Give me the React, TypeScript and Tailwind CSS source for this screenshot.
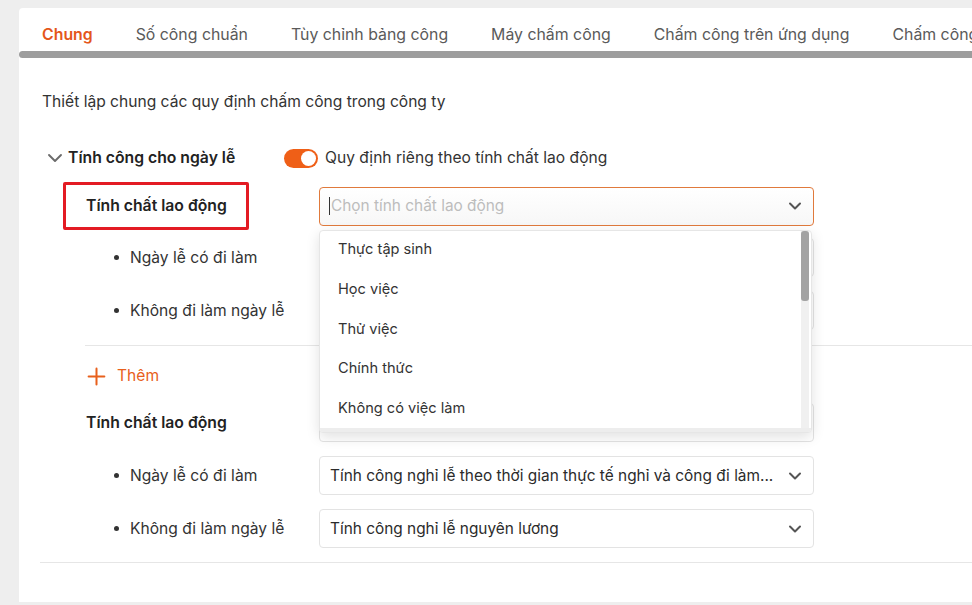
import { ChevronDown, Plus } from "lucide-react";

const tabs = [
  "Chung",
  "Số công chuẩn",
  "Tùy chỉnh bảng công",
  "Máy chấm công",
  "Chấm công trên ứng dụng",
  "Chấm công",
];

const options = ["Thực tập sinh", "Học việc", "Thử việc", "Chính thức", "Không có việc làm"];

function Select({ value, placeholder }: { value?: string; placeholder?: string }) {
  return (
    <div className="flex h-[39px] w-[495px] items-center justify-between rounded-[4px] border border-[#e3e3e3] bg-white pl-[10px] pr-[8px]">
      <span className="truncate text-[15.4px] text-[#2b2b2b]">{value ?? placeholder}</span>
      <ChevronDown className="h-[20px] w-[20px] shrink-0 text-[#555]" strokeWidth={2.4} />
    </div>
  );
}

function Bullet({ label, value }: { label: string; value?: string }) {
  return (
    <div className="flex items-center">
      <div className="flex w-[234px] items-center pl-[29px]">
        <span className="h-[5px] w-[5px] rounded-full bg-[#333]" />
        <span className="ml-[11px] text-[15.6px] text-[#333]">{label}</span>
      </div>
      <Select value={value} />
    </div>
  );
}

export default function App() {
  return (
    <div className="min-h-screen bg-[#eeeeee] pt-[8px] pl-[19px]" style={{ fontFamily: "Inter, 'Noto Sans', sans-serif" }}>
      <div className="h-[594px] overflow-hidden rounded-tl-[4px] bg-white">
        {/* tabs */}
        <div className="flex h-[43px] items-end gap-[43px] whitespace-nowrap pb-[5px] pl-[23px] text-[15.85px] leading-[22px]">
          {tabs.map((t, i) => (
            <span key={i} className={i === 0 ? "font-semibold text-[#e4561a]" : "text-[#5a5a5a]"}>
              {t}
            </span>
          ))}
        </div>
        <div className="h-[7px] rounded-l-full bg-[#9d9d9d]" />

        <div className="px-[23px]">
          <p className="mt-[33px] text-[15.6px] leading-[22px] text-[#333]">
            Thiết lập chung các quy định chấm công trong công ty
          </p>

          {/* heading row */}
          <div className="mt-[34px] flex h-[22px] items-center">
            <div className="flex w-[242px] items-center">
              <ChevronDown className="ml-px h-[24px] w-[24px] text-[#6b6b6b]" strokeWidth={1.9} />
              <span className="ml-px text-[15.75px] font-semibold text-[#222]">Tính công cho ngày lễ</span>
            </div>
            <div className="flex h-[19px] w-[34px] items-center justify-end rounded-full bg-[#ef5f17] pr-[2px]">
              <span className="h-[15px] w-[15px] rounded-full bg-white" />
            </div>
            <span className="ml-[7px] text-[15.6px] text-[#333]">Quy định riêng theo tính chất lao động</span>
          </div>

          {/* group 1 */}
          <div className="ml-[43px]">
            <div className="mt-[13px] flex h-[48px] items-center">
              <div className="w-[234px]">
                <div className="-ml-[22px] flex h-[48px] w-[186px] items-center rounded-[2px] border-[3px] border-[#e31b23] pl-[20px] text-[15.75px] font-semibold text-[#222]">
                  Tính chất lao động
                </div>
              </div>
              <div className="relative">
                <div className="flex h-[39px] w-[495px] items-center justify-between rounded-[4px] border border-[#e07a3c] bg-gradient-to-b from-white to-[#f7f7f7] pl-[9px] pr-[8px]">
                  <span className="flex items-center text-[15.4px] text-[#bdbdbd]">
                    <span className="mr-px h-[18px] w-px bg-[#333]" />
                    Chọn tính chất lao động
                  </span>
                  <ChevronDown className="h-[20px] w-[20px] text-[#555]" strokeWidth={2.4} />
                </div>

                {/* dropdown */}
                <div className="absolute left-0 top-[43px] z-10 flex h-[203px] w-[493px] flex-col overflow-hidden rounded-[4px] border border-[#e6e6e6] bg-white shadow-[0_4px_14px_rgba(0,0,0,0.12)]">
                  <div className="flex flex-1">
                    <div className="flex-1">
                      {options.map((o) => (
                        <div key={o} className="flex h-[39.6px] items-center pl-[18px] text-[14.6px] text-[#333]">
                          {o}
                        </div>
                      ))}
                    </div>
                    <div className="mr-[2px] w-[8px] bg-[#f0f0f0]">
                      <div className="h-[70px] rounded-[3px] bg-[#a3a3a3]" />
                    </div>
                  </div>
                  <div className="h-[4px] bg-[#ededed]" />
                </div>
              </div>
            </div>

            <div className="mt-[8px]">
              <Bullet label="Ngày lễ có đi làm" />
            </div>
            <div className="mt-[14px]">
              <Bullet label="Không đi làm ngày lễ" />
            </div>

            <div className="-mr-[23px] mt-[15px] border-t border-[#e6e6e6]" />

            <div className="mt-[19px] flex h-[22px] items-center text-[#e8601c]">
              <Plus className="-ml-[2px] h-[27px] w-[27px]" strokeWidth={1.8} />
              <span className="ml-[7px] text-[15.6px]">Thêm</span>
            </div>

            {/* group 2 */}
            <div className="mt-[16px] flex items-center">
              <div className="w-[234px] pl-px text-[15.75px] font-semibold text-[#222]">Tính chất lao động</div>
              <Select />
            </div>
            <div className="mt-[14px]">
              <Bullet label="Ngày lễ có đi làm" value="Tính công nghỉ lễ theo thời gian thực tế nghỉ và công đi làm..." />
            </div>
            <div className="mt-[14px]">
              <Bullet label="Không đi làm ngày lễ" value="Tính công nghỉ lễ nguyên lương" />
            </div>
          </div>

          <div className="-ml-[2px] -mr-[23px] mt-[14px] border-t border-[#e6e6e6]" />
        </div>
      </div>
    </div>
  );
}
